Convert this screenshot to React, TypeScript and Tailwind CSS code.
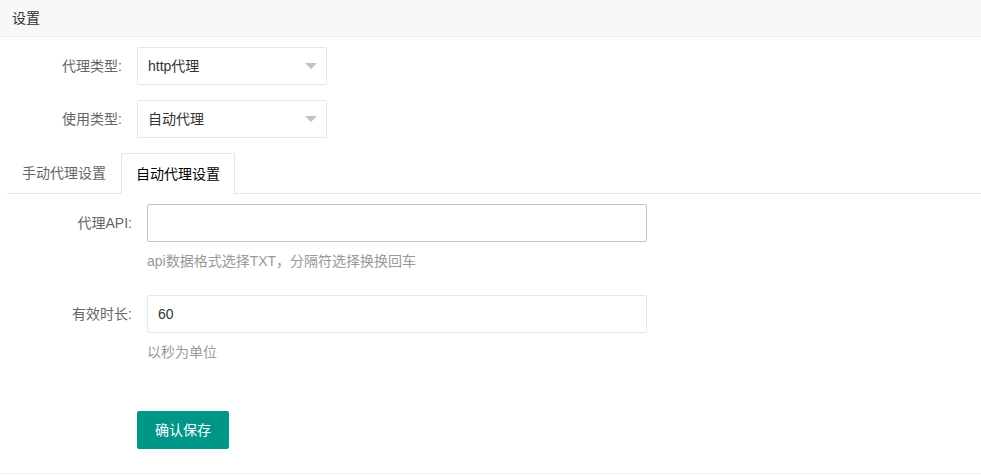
import React from 'react';

const font = { fontFamily: '"Liberation Sans", "Noto Sans CJK SC", sans-serif' };

const Label: React.FC<{ children: React.ReactNode; w: string }> = ({ children, w }) => (
  <label className={`${w} shrink-0 pr-[15px] text-right leading-[38px] text-[#666]`}>{children}</label>
);

const Select: React.FC<{ value: string }> = ({ value }) => (
  <div className="flex h-[38px] w-[190px] items-center justify-between rounded-[2px] border border-[#e6e6e6] bg-white pl-[10px] pr-[9px] text-[#333]">
    <span>{value}</span>
    <span className="h-0 w-0 border-x-[6px] border-t-[6px] border-x-transparent border-t-[#c2c2c2]" />
  </div>
);

export default function App() {
  return (
    <div className="min-h-[475px] w-full bg-white text-sm" style={font}>
      <div className="h-[37px] border-b border-[#eeeeee] bg-[#f8f8f8] px-3 leading-[36px] text-[#333]">设置</div>

      <div className="border-b border-[#eeeeee] pb-[24px]">
        <div className="flex flex-col gap-[15px] pt-[10px]">
          <div className="flex">
            <Label w="w-[137px]">代理类型:</Label>
            <Select value="http代理" />
          </div>
          <div className="flex">
            <Label w="w-[137px]">使用类型:</Label>
            <Select value="自动代理" />
          </div>
        </div>

        <div className="ml-[7px] mt-[15px]">
          <ul className="flex h-[41px] border-b border-[#e6e6e6]">
            <li className="h-[40px] px-[15px] leading-[40px] text-[#666]">手动代理设置</li>
            <li className="-mb-px h-[41px] border border-b-0 border-[#e6e6e6] bg-white px-[14px] leading-[40px] text-[#000]">
              自动代理设置
            </li>
          </ul>
        </div>

        <div className="pt-[10px]">
          <div className="flex">
            <Label w="w-[147px]">代理API:</Label>
            <div className="flex flex-col">
              <input
                className="h-[38px] w-[500px] rounded-[2px] border border-[#c2c2c2] px-[10px] text-[#333] outline-none"
                defaultValue=""
              />
              <div className="py-[9px] leading-[20px] text-[#999]">api数据格式选择TXT，分隔符选择换换回车</div>
            </div>
          </div>
          <div className="mt-[15px] flex">
            <Label w="w-[147px]">有效时长:</Label>
            <div className="flex flex-col">
              <input
                className="h-[38px] w-[500px] rounded-[2px] border border-[#e6e6e6] px-[10px] text-[#333] outline-none"
                defaultValue="60"
              />
              <div className="py-[9px] leading-[20px] text-[#999]">以秒为单位</div>
            </div>
          </div>
          <div className="mt-[40px] pl-[137px]">
            <button className="h-[38px] rounded-[2px] bg-[#009688] px-[18px] text-sm text-white">确认保存</button>
          </div>
        </div>
      </div>
    </div>
  );
}
